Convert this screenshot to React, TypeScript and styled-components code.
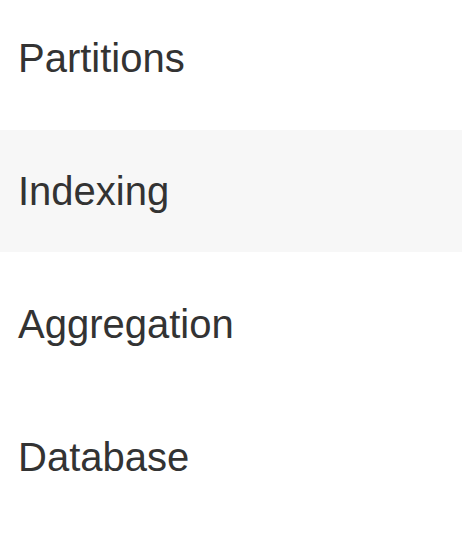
import React from "react";
import styled, { createGlobalStyle } from "styled-components";

const GlobalStyle = createGlobalStyle`
  html, body {
    margin: 0;
    padding: 0;
    background: #ffffff;
  }
  body {
    font-family: "Liberation Sans", Arial, Helvetica, sans-serif;
    overflow: hidden;
  }
`;

const MenuList = styled.ul`
  list-style: none;
  margin: -3px 0 0;
  padding: 0;
  display: flex;
  flex-direction: column;
  gap: 11px;
`;

const MenuItem = styled.li<{ $active?: boolean }>`
  display: flex;
  align-items: center;
  height: 122px;
  padding: 0 18px;
  font-size: 40px;
  line-height: 46px;
  color: #333333;
  background-color: ${({ $active }) => ($active ? "#f7f7f7" : "transparent")};
  cursor: pointer;
`;

const items = ["Partitions", "Indexing", "Aggregation", "Database"];

const App = () => {
  return (
    <>
      <GlobalStyle />
      <MenuList>
        {items.map((item) => (
          <MenuItem key={item} $active={item === "Indexing"}>
            {item}
          </MenuItem>
        ))}
      </MenuList>
    </>
  );
};

export default App;
